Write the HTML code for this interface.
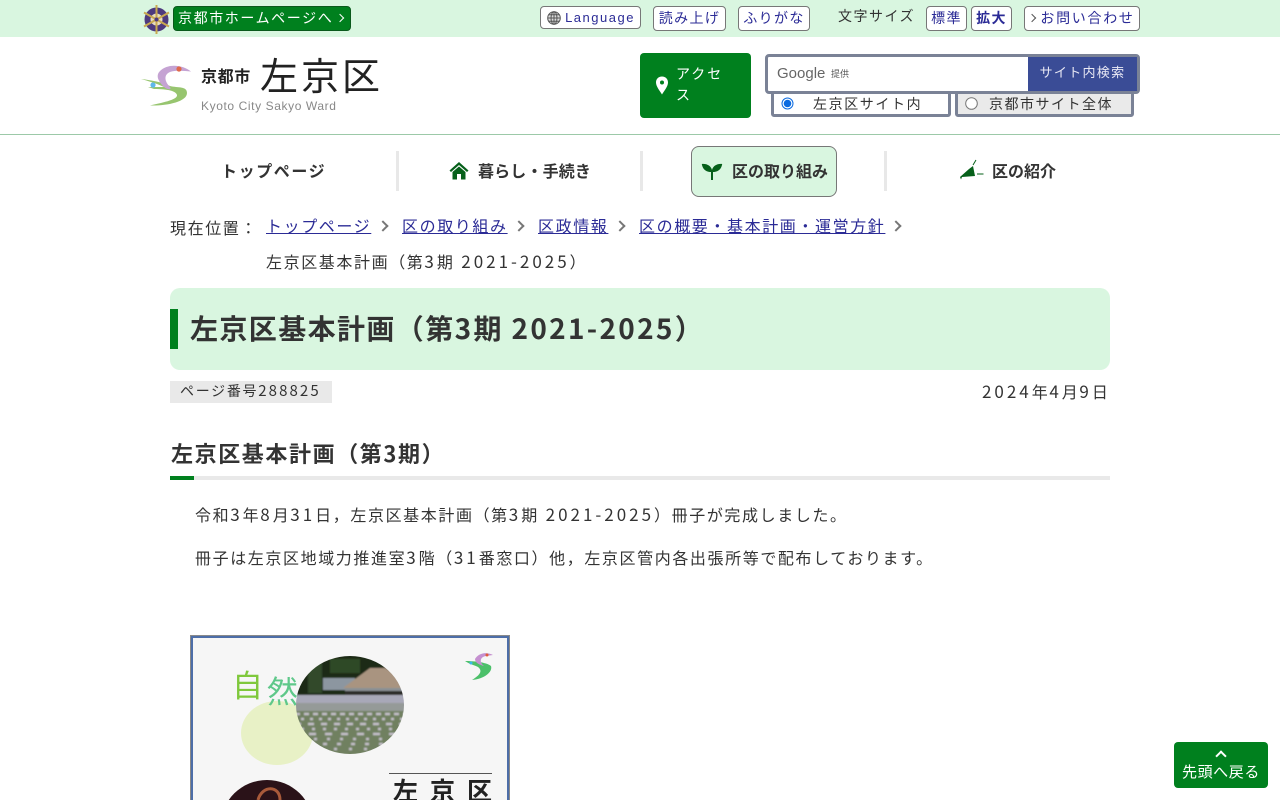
<!DOCTYPE html>
<html lang="ja"><head><meta charset="utf-8"><title>左京区基本計画（第3期 2021-2025）</title>
<style>
*{box-sizing:border-box}
html,body{margin:0;padding:0;background:#fff;width:1280px;height:800px;overflow:hidden}
body{font-family:"Noto Sans CJK JP","Liberation Sans",sans-serif;color:#333;position:relative}
.a{position:absolute;white-space:nowrap}
.b{position:absolute;white-space:nowrap;background:#fff;border:1px solid #777;border-radius:4px;color:#2b2b96;font-size:14px;letter-spacing:1.4px;text-align:center;line-height:22px}
.sep{position:absolute;top:151px;width:3px;height:40px;background:#e8e8e8}
.nav{position:absolute;white-space:nowrap;font-size:16px;font-weight:bold;color:#333;line-height:22px}
a{color:#2b2b96;text-decoration:underline}
.gt{position:absolute;top:222px;width:8px;height:8px;border-top:2px solid #777;border-right:2px solid #777;transform:rotate(45deg)}
.t{font-size:16px;letter-spacing:1.6px;line-height:22px}
.d{font-size:17px;letter-spacing:3px}
.h{letter-spacing:2.300px}
</style></head><body>
<div class="a" style="left:0;top:0;width:1280px;height:37px;background:#d9f6e0"></div>
<svg class="a" style="left:143px;top:5px" width="27" height="30" viewBox="0 0 27 30"><circle cx="13.5" cy="14.5" r="12" fill="#4d3a7e"/><circle cx="13.5" cy="14.5" r="6" fill="#e6dcc0"/><g stroke="#c9a94f" stroke-width="2"><path d="M13.5 0V29M1 7.5L26 21.5M26 7.5L1 21.5"/></g><circle cx="13.5" cy="14.5" r="2" fill="#4d3a7e"/></svg>
<div class="a" style="left:173px;top:6px;width:178px;height:25px;background:#00801e;border:1px solid #0a5a1c;border-radius:4px;color:#fff;font-size:14px;letter-spacing:1.6px;line-height:22px;padding-left:4px">京都市ホームページへ</div>
<div class="a" style="left:337px;top:15px;width:6px;height:6px;border-top:1.5px solid #fff;border-right:1.5px solid #fff;transform:rotate(45deg)"></div>

<div class="b" style="left:540px;top:6px;width:101px;height:23px;line-height:21px;padding-left:19px;font-family:'Liberation Sans',sans-serif;font-size:13px;letter-spacing:1.5px">Language</div>
<svg class="a" style="left:547px;top:11px" width="14" height="14" viewBox="0 0 14 14" fill="none" stroke="#555" stroke-width="1"><circle cx="7" cy="7" r="6.3" fill="#ddd"/><ellipse cx="7" cy="7" rx="3" ry="6.3"/><path d="M7 .7V13.3M.7 7H13.3M1.6 3.8H12.4M1.6 10.2H12.4"/></svg>
<div class="b" style="left:653px;top:6px;width:73px;height:25px">読み上げ</div>
<div class="b" style="left:738px;top:6px;width:72px;height:25px">ふりがな</div>
<div class="a" style="left:838px;top:6px;font-size:14px;letter-spacing:1.5px;line-height:20px">文字サイズ</div>
<div class="b" style="left:926px;top:6px;width:41px;height:25px">標準</div>
<div class="b" style="left:971px;top:6px;width:41px;height:25px;font-weight:bold">拡大</div>
<div class="b" style="left:1024px;top:6px;width:116px;height:25px;padding-left:11px;letter-spacing:1.7px">お問い合わせ</div>
<div class="a" style="left:1029px;top:15px;width:6px;height:6px;border-top:1px solid #555;border-right:1px solid #555;transform:rotate(45deg)"></div>

<svg class="a" style="left:140px;top:62px" width="54" height="48" viewBox="0 0 54 48"><path d="M1 17C10 18 22 20 30 24C38 26 47 24 47 31C47 40 26 44 10 43.500C20 41 38 38 37 33C36 29 28 27 14 27L8 25L24 25C18 22 8 19 1 17Z" fill="#97c56f"/><path d="M51 9.500C43 3 28 1 20 9C15 14 19 20 24 25C28 28 32 28 30 25C25 20 23 13 30 10C36 8 44 9 51 9.500Z" fill="#c5a3d3"/><circle cx="13" cy="23" r="2.600" fill="#5eb8ea"/><circle cx="39" cy="7" r="2.600" fill="#e0694b"/></svg>
<div class="a" style="left:201px;top:65px;font-size:16px;font-weight:bold;letter-spacing:.6px;line-height:20px;color:#222">京都市</div>
<div class="a" style="left:260px;top:52px;font-size:38px;letter-spacing:3px;line-height:44px;color:#222">左京区</div>
<div class="a" style="left:201px;top:98px;font-size:12px;letter-spacing:.6px;line-height:16px;color:#888;font-family:'Liberation Sans',sans-serif">Kyoto City Sakyo Ward</div>

<div class="a" style="left:640px;top:53px;width:111px;height:65px;background:#00801e;border-radius:4px"></div>
<svg class="a" style="left:655px;top:76px" width="14" height="19" viewBox="0 0 14 19"><path d="M7 .5C3.3.5 1 3.2 1 6.5C1 10.5 5 15 7 18.5C9 15 13 10.5 13 6.5C13 3.2 10.7.5 7 .5Z" fill="#fff"/><circle cx="7" cy="6.5" r="2" fill="#00801e"/></svg>
<div class="a" style="left:676px;top:64px;font-size:14px;letter-spacing:2px;line-height:21px;color:#fff">アクセ<br>ス</div>

<div class="a" style="left:771px;top:88px;width:180px;height:29px;border:3px solid #7a8296;border-radius:3px;background:#fff"></div>
<div class="a" style="left:955px;top:88px;width:179px;height:29px;border:3px solid #7a8296;border-radius:3px;background:#eaeaea"></div>
<div class="a" style="left:765px;top:54px;width:375px;height:40px;border:3px solid #7a8296;border-radius:4px;background:#fff"></div>
<div class="a" style="left:1028px;top:57px;width:109px;height:34px;background:#3a4c96;color:#e8e8f4;font-size:13px;letter-spacing:1.3px;line-height:30px;text-align:center">サイト内検索</div>
<div class="a" style="left:777px;top:64px;font-family:'Liberation Sans',sans-serif;font-size:15px;color:#666;line-height:20px">Google</div>
<div class="a" style="left:831px;top:67px;font-size:9px;color:#555;line-height:14px">提供</div>
<svg class="a" style="left:780px;top:96px" width="200" height="16"><circle cx="7.500" cy="7.500" r="5.500" fill="#fff" stroke="#0a6ae0" stroke-width="1"/><circle cx="7.500" cy="7.500" r="3.800" fill="#0a6ae0"/><circle cx="191.500" cy="7.500" r="5.800" fill="#fff" stroke="#777" stroke-width="1"/></svg>
<div class="a" style="left:813px;top:94px;font-size:14px;letter-spacing:1.6px;line-height:20px">左京区サイト内</div>
<div class="a" style="left:989px;top:94px;font-size:14px;letter-spacing:1.5px;line-height:20px">京都市サイト全体</div>

<div class="a" style="left:0;top:134px;width:1280px;height:1px;background:#9cc9a8"></div>
<div class="nav" style="left:221px;top:159px;letter-spacing:1.6px">トップページ</div>
<div class="sep" style="left:396px"></div>
<svg class="a" style="left:449px;top:161px" width="20" height="19" viewBox="0 0 20 19"><path d="M10 1L.5 9.500L2 11L10 4L18 11L19.500 9.500Z" fill="#06601a"/><path d="M3.500 11L10 5.500L16.500 11V18.500H12V13H8V18.500H3.500Z" fill="#06601a"/></svg>
<div class="nav" style="left:478px;top:159px;letter-spacing:.15px">暮らし・手続き</div>
<div class="sep" style="left:640px"></div>
<div class="a" style="left:691px;top:146px;width:146px;height:51px;background:#d9f6e0;border:1px solid #777;border-radius:8px"></div>
<svg class="a" style="left:701px;top:161px" width="22" height="20" viewBox="0 0 22 20"><path d="M10 19V11C7 11 2 10 .8 3C6 2.500 10 5 11 9C12 5 16 2.500 21.200 3C20 10 15 11 12 11V19Z" fill="#06601a"/></svg>
<div class="nav" style="left:732px;top:159px">区の取り組み</div>
<div class="sep" style="left:884px"></div>
<svg class="a" style="left:959px;top:159px" width="26" height="22" viewBox="0 0 26 22"><path d="M1 18L10 10L14 7L16 17L3 18L2 20.500Z" fill="#06601a"/><path d="M14 6L17 1M18 15H24.500" stroke="#06601a" stroke-width="1"/></svg>
<div class="nav" style="left:992px;top:159px">区の紹介</div>

<div class="a t" style="left:170px;top:216px">現在位置：</div>
<div class="a t" style="left:266px;top:214px"><a>トップページ</a></div>
<div class="gt" style="left:379px"></div>
<div class="a t" style="left:402px;top:214px"><a>区の取り組み</a></div>
<div class="gt" style="left:515px"></div>
<div class="a t" style="left:538px;top:214px"><a>区政情報</a></div>
<div class="gt" style="left:616px"></div>
<div class="a t" style="left:639px;top:214px"><a>区の概要・基本計画・運営方針</a></div>
<div class="gt" style="left:892px"></div>
<div class="a t" style="left:266px;top:250px">左京区基本計画（第<span class="d">3</span>期<span class="d"> 2021-2025</span>）</div>

<div class="a" style="left:170px;top:288px;width:940px;height:82px;background:#d9f6e0;border-radius:10px"></div>
<div class="a" style="left:170px;top:309px;width:8px;height:40px;background:#00801e"></div>
<div class="a" style="left:190px;top:309px;font-size:28px;font-weight:bold;letter-spacing:1.400px;line-height:38px">左京区基本計画（第<span class="h">3</span>期<span class="h"> 2021-2025</span>）</div>

<div class="a" style="left:170px;top:381px;width:162px;height:22px;background:#e9e9e9"></div>
<div class="a" style="left:180px;top:380px;font-size:14px;letter-spacing:1.700px;line-height:22px">ページ番号<span style="font-size:15px;letter-spacing:2.100px">288825</span></div>
<div class="a t" style="left:982px;top:380px"><span class="d">2024</span>年<span class="d">4</span>月<span class="d">9</span>日</div>

<div class="a" style="left:171px;top:438px;font-size:22px;font-weight:bold;letter-spacing:1.600px;line-height:30px">左京区基本計画（第3期）</div>
<div class="a" style="left:170px;top:476px;width:940px;height:4px;background:#e9e9e9"></div>
<div class="a" style="left:170px;top:476px;width:24px;height:4px;background:#00801e"></div>

<div class="a t" style="left:195px;top:503px">令和<span class="d">3</span>年<span class="d">8</span>月<span class="d">31</span>日，左京区基本計画（第<span class="d">3</span>期<span class="d"> 2021-2025</span>）冊子が完成しました。</div>
<div class="a t" style="left:195px;top:546px">冊子は左京区地域力推進室<span class="d">3</span>階（<span class="d">31</span>番窓口）他，左京区管内各出張所等で配布しております。</div>

<svg class="a" style="left:190px;top:635px" width="320" height="165" viewBox="0 0 320 165">
<defs><clipPath id="c"><ellipse cx="160" cy="70" rx="54" ry="49"/></clipPath><filter id="bl"><feGaussianBlur stdDeviation=".7"/></filter></defs>
<rect x="0" y="0" width="320" height="165" fill="#8a8a8a"/>
<rect x="1" y="1" width="318" height="164" fill="#4d6ea8"/>
<rect x="3" y="3" width="314" height="162" fill="#f6f6f6"/>
<ellipse cx="87" cy="98" rx="36" ry="32" fill="#e8f1c6"/>
<text x="42" y="62" font-size="31" fill="#7fc83c" font-family="'Noto Sans CJK JP',sans-serif">自</text>
<text x="77" y="68" font-size="31" fill="#5fc88a" font-family="'Noto Sans CJK JP',sans-serif">然</text>
<g clip-path="url(#c)"><g filter="url(#bl)"><rect x="100" y="15" width="120" height="50" fill="#1f2c18"/><rect x="118" y="28" width="14" height="30" fill="#324a2a"/><rect x="140" y="24" width="30" height="14" fill="#2f4a26"/><rect x="133" y="43" width="32" height="12" fill="#8c96a0"/><path d="M153 53L180 33H195L225 50V53Z" fill="#a99480"/><rect x="155" y="53" width="70" height="3" fill="#8a9094"/><rect x="155" y="56" width="70" height="4" fill="#2a2a28"/><rect x="100" y="60" width="120" height="70" fill="#6f8060"/><rect x="100" y="60" width="120" height="8" fill="#a8a8b8"/><rect x="100" y="68" width="120" height="8" fill="#959a98"/>
<g stroke="#c4bfc9" stroke-width="2.500" fill="none"><path d="M105 79h110" stroke-dasharray="5 4"/><path d="M105 84h110" stroke-dasharray="3 6" stroke-dashoffset="3"/><path d="M105 89h110" stroke-dasharray="6 7"/><path d="M105 94h110" stroke-dasharray="3 8" stroke-dashoffset="5"/><path d="M105 99h110" stroke-dasharray="7 9" stroke-dashoffset="2"/><path d="M105 104h110" stroke-dasharray="3 10" stroke-dashoffset="7"/><path d="M105 109h110" stroke-dasharray="4 10"/><path d="M105 114h110" stroke-dasharray="3 12" stroke-dashoffset="6"/></g></g></g>
<path d="M275 26C283 26 296 27 301 31C303 37 294 44 282 45C290 40 293 36 288 32C284 30 279 29 275 26Z" fill="#4cc06a"/><path d="M303 20C295 16 288 19 285 24C285 28 290 30 294 31C289 27 290 22 296 21Z" fill="#c590d0"/><circle cx="297" cy="20" r="1.500" fill="#e05a3a"/><circle cx="281" cy="28" r="1.500" fill="#3ab8ea"/>
<ellipse cx="77" cy="190" rx="46" ry="45" fill="#2a1218"/><path d="M68 165C72 150 90 150 90 165" stroke="#a85a3a" stroke-width="3" fill="none"/>
<rect x="199" y="138" width="103" height="1" fill="#555"/>
<text x="203" y="165" font-size="25" font-weight="bold" fill="#222" letter-spacing="12" font-family="'Noto Sans CJK JP',sans-serif">左京区</text>
</svg>

<div class="a" style="left:1174px;top:742px;width:94px;height:46px;background:#00801e;border-radius:4px"></div>
<div class="a" style="left:1217px;top:752px;width:8px;height:8px;border-top:2px solid #fff;border-left:2px solid #fff;transform:rotate(45deg)"></div>
<div class="a" style="left:1174px;top:762px;width:94px;text-align:center;color:#fff;font-size:15px;letter-spacing:.6px;line-height:20px">先頭へ戻る</div>
</body></html>
